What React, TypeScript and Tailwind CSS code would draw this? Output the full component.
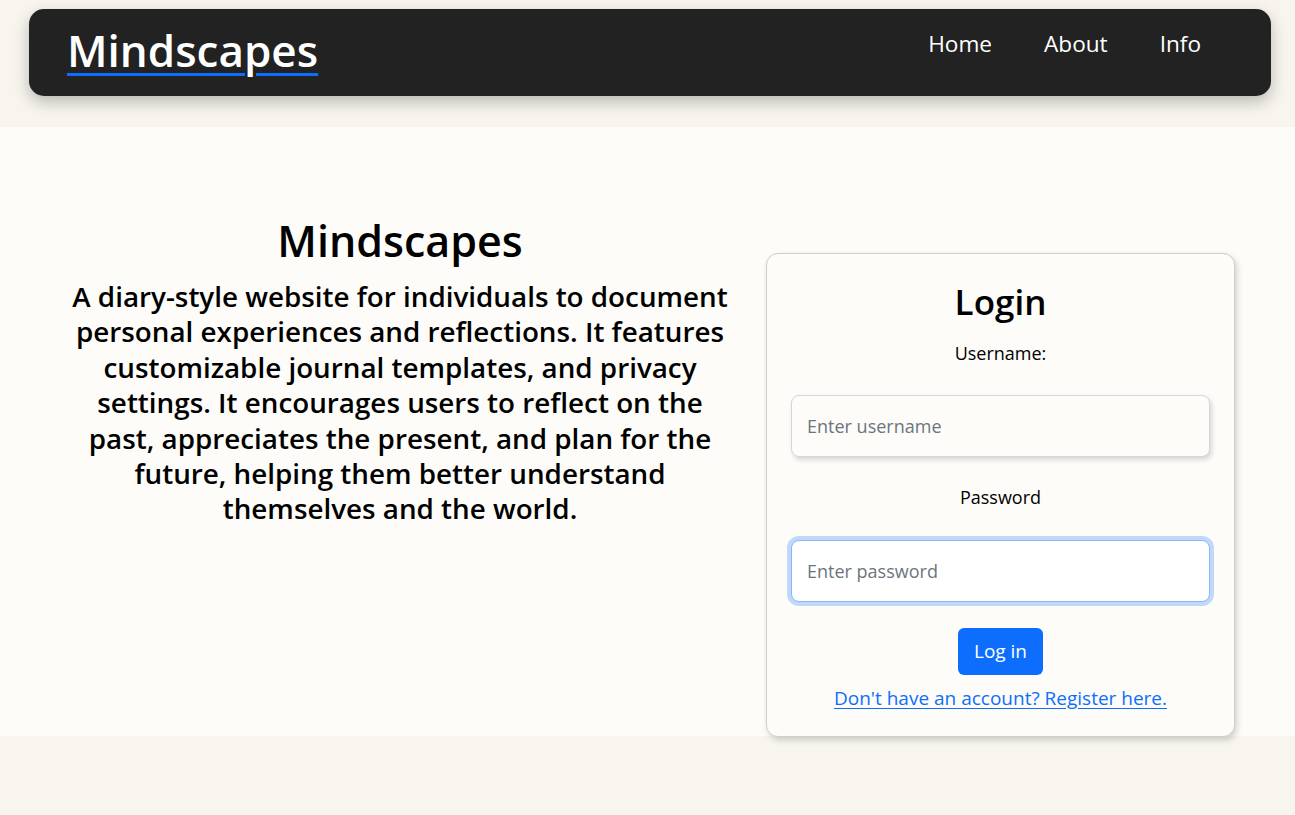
import { useState } from "react";

const font = { fontFamily: '"Open Sans", "Noto Sans", sans-serif' };

function NavBar() {
  return (
    <nav className="ml-[29px] mr-[24px] pt-[9px]">
      <div className="flex h-[87px] items-center justify-between rounded-[15px] bg-[#222222] pl-[38px] pr-[70px] shadow-[0_6px_16px_rgba(0,0,0,0.25)]">
        <a
          href="#"
          className="-mt-[6px] text-[44px] font-semibold leading-none text-white underline decoration-[#0d6efd] decoration-[3px] underline-offset-[6px]"
        >
          Mindscapes
        </a>
        <div className="-mt-[18px] flex items-center gap-[52px] text-[22.6px] text-white">
          <a href="#">Home</a>
          <a href="#">About</a>
          <a href="#">Info</a>
        </div>
      </div>
    </nav>
  );
}

function LoginCard() {
  const [user, setUser] = useState("");
  const [pass, setPass] = useState("");

  return (
    <div className="w-[469px] rounded-[12px] border border-[#cfcfcf] bg-[#fdfcf8] px-[24px] pb-[24px] pt-[24px] text-center shadow-[2px_3px_6px_rgba(0,0,0,0.18)]">
      <h2 className="text-[35px] font-semibold leading-[48px] text-black">Login</h2>
      <label className="mt-[13px] block text-[18px] leading-[28px] text-black">
        Username:
      </label>
      <input
        value={user}
        onChange={(e) => setUser(e.target.value)}
        placeholder="Enter username"
        className="mt-[28px] block h-[62px] w-full rounded-[8px] border border-[#d3d6db] bg-[#fdfcf8] px-[15px] text-[18px] text-black shadow-[2px_3px_5px_rgba(0,0,0,0.15)] outline-none placeholder:text-[#6c757d]"
      />
      <label className="mt-[26px] block text-[18px] leading-[28px] text-black">
        Password
      </label>
      <input
        type="password"
        value={pass}
        onChange={(e) => setPass(e.target.value)}
        placeholder="Enter password"
        className="mt-[29px] block h-[62px] w-full rounded-[8px] border border-[#86b7fe] bg-white px-[15px] text-[18px] text-black shadow-[0_0_0_4px_rgba(13,110,253,0.25)] outline-none placeholder:text-[#6c757d]"
      />
      <button className="mx-auto mt-[26px] block h-[47px] rounded-[6px] bg-[#0d6efd] px-[16px] text-[19px] text-white">
        Log in
      </button>
      <a
        href="#"
        className="mt-[9px] inline-block text-[19px] leading-[28px] text-[#0d6efd] underline underline-offset-[3px]"
      >
        Don't have an account? Register here.
      </a>
    </div>
  );
}

export default function App() {
  return (
    <div className="min-h-[815px] bg-[#f8f5ef]" style={font}>
      <NavBar />
      <main className="mt-[31px] flex bg-[#fdfcf8] pt-[126px]">
        <div className="-mt-[40px] flex w-[766px] flex-col items-center pl-[50px] pr-[16px]">
          <h1 className="text-[43px] font-semibold leading-[56px] text-black">Mindscapes</h1>
          <p className="mt-[10px] w-[668px] text-center text-[27.8px] font-semibold leading-[35.4px] text-black">
            A diary-style website for individuals to document personal experiences and
            reflections. It features customizable journal templates, and privacy settings. It
            encourages users to reflect on the past, appreciates the present, and plan for the
            future, helping them better understand themselves and the world.
          </p>
        </div>
        <div className="-mb-px">
          <LoginCard />
        </div>
      </main>
    </div>
  );
}
